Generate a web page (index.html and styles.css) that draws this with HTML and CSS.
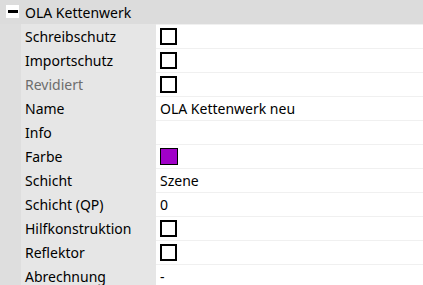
FILE: index.html
```html
<!DOCTYPE html>
<html lang="de">
<head>
    <meta charset="UTF-8">
    <title>Eigenschaften</title>
    <link rel="stylesheet" href="styles.css">
</head>
<body>
    <div class="grid">
        <div class="group">
            <span class="toggle"><span class="minus"></span></span>
            <span class="groupName">OLA Kettenwerk</span>
        </div>
        <div class="row"><div class="gutter"></div><div class="label">Schreibschutz</div><div class="value"><span class="check"></span></div></div>
        <div class="row"><div class="gutter"></div><div class="label">Importschutz</div><div class="value"><span class="check"></span></div></div>
        <div class="row"><div class="gutter"></div><div class="label dim">Revidiert</div><div class="value"><span class="check"></span></div></div>
        <div class="row"><div class="gutter"></div><div class="label">Name</div><div class="value">OLA Kettenwerk neu</div></div>
        <div class="row"><div class="gutter"></div><div class="label">Info</div><div class="value"></div></div>
        <div class="row"><div class="gutter"></div><div class="label">Farbe</div><div class="value"><span class="swatch"></span></div></div>
        <div class="row"><div class="gutter"></div><div class="label">Schicht</div><div class="value">Szene</div></div>
        <div class="row"><div class="gutter"></div><div class="label">Schicht (QP)</div><div class="value">0</div></div>
        <div class="row"><div class="gutter"></div><div class="label">Hilfkonstruktion</div><div class="value"><span class="check"></span></div></div>
        <div class="row"><div class="gutter"></div><div class="label">Reflektor</div><div class="value"><span class="check"></span></div></div>
        <div class="row"><div class="gutter"></div><div class="label">Abrechnung</div><div class="value">-</div></div>
    </div>
</body>
</html>
```

FILE: styles.css
```css
body {
    margin: 0;
    background: #fff;
    font-family: 'Noto Sans', sans-serif;
    font-size: 14px;
    color: #000;
}
.grid {
    width: 423px;
}
.group {
    display: flex;
    align-items: center;
    height: 24px;
    background: #dcdcdc;
}
.toggle {
    display: flex;
    align-items: center;
    justify-content: center;
    width: 13px;
    height: 13px;
    margin: 0 6px 1px 6px;
    background: #fff;
}
.minus {
    width: 10px;
    height: 3px;
    background: #000;
}
.row {
    display: flex;
    height: 24px;
}
.gutter {
    width: 21px;
    background: #dedede;
}
.label {
    display: flex;
    align-items: center;
    width: 131px;
    padding-left: 4px;
    background: #e6e6e6;
}
.dim {
    color: #6d6d6d;
}
.value {
    flex: 1;
    display: flex;
    align-items: center;
    padding-left: 4px;
    border-top: 1px solid #f0f0f0;
}
.check {
    width: 13px;
    height: 13px;
    border: 2px solid #000;
    background: #fff;
}
.swatch {
    width: 16px;
    height: 15px;
    border: 1px solid #000;
    background: #a000c8;
}
```
